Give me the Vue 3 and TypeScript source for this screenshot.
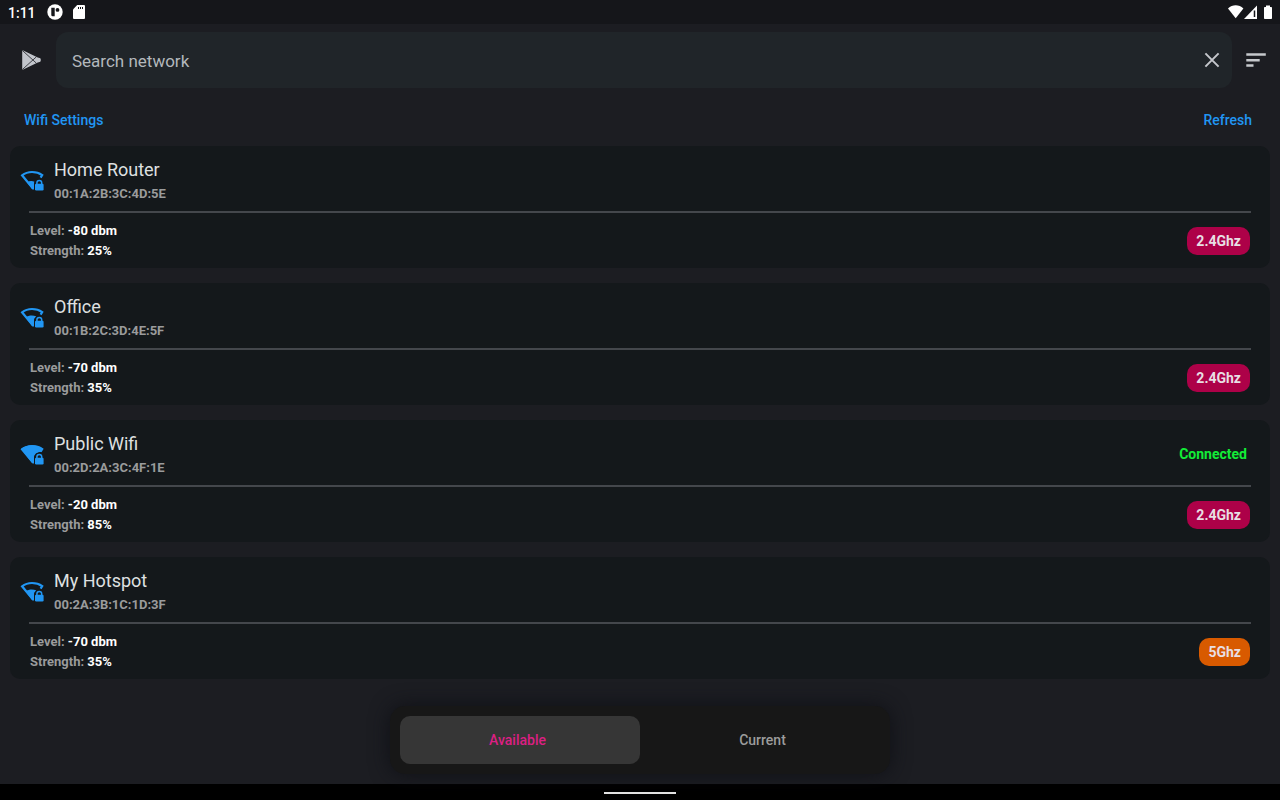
<script setup lang="ts">
import { computed, ref } from 'vue'

interface Network {
  name: string
  mac: string
  level: number
  strength: number
  band: '2.4Ghz' | '5Ghz'
  connected: boolean
}

const networks: Network[] = [
  { name: 'Home Router', mac: '00:1A:2B:3C:4D:5E', level: -80, strength: 25, band: '2.4Ghz', connected: false },
  { name: 'Office', mac: '00:1B:2C:3D:4E:5F', level: -70, strength: 35, band: '2.4Ghz', connected: false },
  { name: 'Public Wifi', mac: '00:2D:2A:3C:4F:1E', level: -20, strength: 85, band: '2.4Ghz', connected: true },
  { name: 'My Hotspot', mac: '00:2A:3B:1C:1D:3F', level: -70, strength: 35, band: '5Ghz', connected: false },
]

const query = ref('')
const tab = ref<'available' | 'current'>('available')

const visible = computed(() =>
  networks.filter(
    (n) =>
      n.name.toLowerCase().includes(query.value.toLowerCase()) &&
      (tab.value === 'available' || n.connected),
  ),
)

// Filled part of the signal fan, by strength
function fill(strength: number): string {
  if (strength > 75) return 'M1 6.8C4 4.5 7.7 3.2 12 3.2s8 1.3 11 3.6l-2.2 3.1C17 9.9 14 12 14 16v5.4h-1.4Z'
  if (strength > 30) return 'M5.6 12.3C8.6 10.3 13 10 16.4 11.5C14.6 12.7 14 14.2 14 16v5.4h-1.6Z'
  return 'M7 14.2C9.2 12.9 12.2 12.8 14.6 13.7L14 15.5v5.9h-1.6Z'
}
</script>

<template>
  <div class="app">
    <div class="status">
      <span class="clock">1:11</span>
      <svg class="status-app" width="16" height="16" viewBox="0 0 16 16">
        <circle cx="8" cy="8" r="7.7" fill="#fff" />
        <path d="M4.300 3.800h3.400v8.400H5.600A1.300 1.300 0 0 1 4.300 11Z" fill="#15161a" />
        <circle cx="10.500" cy="5.900" r="1.900" fill="#15161a" />
      </svg>
      <svg class="status-sd" width="12" height="14" viewBox="0 0 12 14">
        <path d="M4.200 0H11a1 1 0 0 1 1 1v12a1 1 0 0 1-1 1H1a1 1 0 0 1-1-1V4.500Z" fill="#fff" />
        <path d="M5.500 2v2M7.500 2v2M9.500 2v2" stroke="#15161a" stroke-width="1" />
      </svg>
      <span class="spacer"></span>
      <svg width="45" height="14" viewBox="0 0 45 14" fill="#fff">
        <path d="M0 3.600C4.400-.8 11-.8 15.400 3.600L7.700 13.200Z" />
        <path d="M29 .5V14H16Z" />
        <path d="M26.500 5.500V12" stroke="#15161a" stroke-width="1.500" />
        <path d="M38 .500h4V2h1.200a.8.800 0 0 1 .8.800v10.400a.8.800 0 0 1-.8.800h-6.400a.8.800 0 0 1-.8-.8V2.800a.8.800 0 0 1 .8-.8H38Z" />
      </svg>
    </div>

    <header class="topbar">
      <button class="icon-button" type="button" aria-label="Play Store">
        <svg width="24" height="24" viewBox="1 0 24 24">
          <path d="M3.200 2L19.800 10a2.200 2.200 0 0 1 0 4L3.200 22Z" fill="#c2c5cc" />
          <path d="M3.200 2.300L17.300 15.100M3.200 21.700L17.300 8.900" fill="none" stroke="#1c1d22" stroke-width=".8" />
          <circle cx="19.700" cy="12" r="2.200" fill="#c2c5cc" />
        </svg>
      </button>
      <div class="search">
        <input v-model="query" type="text" placeholder="Search network" aria-label="Search network" />
        <button class="clear" type="button" aria-label="Clear search" @click="query = ''">
          <svg width="24" height="24" viewBox="0 0 24 24">
            <path d="M5.400 5.400L18.600 18.600M18.600 5.400L5.400 18.600" stroke="#c5c7cc" stroke-width="2" />
          </svg>
        </button>
      </div>
      <button class="icon-button" type="button" aria-label="Sort">
        <svg width="24" height="24" viewBox="0 0 24 24" fill="#c5c8cc">
          <path d="M2.300 5.200h19.500v2.500H2.300ZM2.300 10.900h13.400v2.500H2.300ZM2.300 16.200h7.200v2.500H2.300Z" />
        </svg>
      </button>
    </header>

    <nav class="links">
      <a href="#settings">Wifi Settings</a>
      <a href="#refresh">Refresh</a>
    </nav>

    <main class="list">
      <article v-for="n in visible" :key="n.mac" class="card">
        <div class="head">
          <svg class="wifi" width="24" height="24" viewBox="0 0 24 24" fill="#2196f3">
            <path
              d="M13 20.600L2.100 7.300C5 5 8.300 4 12 4s7.200.9 10.200 3.100L20.600 9.600"
              fill="none" stroke="#2196f3" stroke-width="2.200"
            />
            <path :d="fill(n.strength)" />
            <path d="M14.600 22.500V16.500a4.400 4.400 0 0 1 9-1.500" fill="none" stroke="#14181b" stroke-width="1" />
            <rect x="15" y="15.700" width="8.600" height="6.800" rx="1.200" />
            <path d="M16.900 16.500V14.800a2.400 2.400 0 0 1 4.800 0V16.500" fill="none" stroke="#2196f3" stroke-width="1.500" />
          </svg>
          <div class="title">
            <h2>{{ n.name }}</h2>
            <p>{{ n.mac }}</p>
          </div>
          <span v-if="n.connected" class="connected">Connected</span>
        </div>
        <div class="body">
          <dl>
            <div><dt>Level:</dt> <dd>{{ n.level }} dbm</dd></div>
            <div><dt>Strength:</dt> <dd>{{ n.strength }}%</dd></div>
          </dl>
          <span class="band" :class="{ five: n.band === '5Ghz' }">{{ n.band }}</span>
        </div>
      </article>
    </main>

    <div class="dock" :class="tab">
      <button type="button" :aria-pressed="tab === 'available'" @click="tab = 'available'">Available</button>
      <button type="button" :aria-pressed="tab === 'current'" @click="tab = 'current'">Current</button>
    </div>

    <footer class="system"><span></span></footer>
  </div>
</template>

<style>
html,
body {
  margin: 0;
  background: #1c1d22;
}
</style>

<style scoped>
.app {
  box-sizing: border-box;
  min-height: 100vh;
  display: flex;
  flex-direction: column;
  background: #1c1d22;
  color: #dfe0e1;
  font-family: Roboto, "Liberation Sans", sans-serif;
  font-size: 14px;
}
button {
  border: 0;
  padding: 0;
  background: none;
  font: inherit;
  color: inherit;
  cursor: pointer;
}
svg {
  display: block;
  flex: none;
}
.status {
  height: 24px;
  padding: 0 7px 0 8px;
  display: flex;
  align-items: center;
  background: #15161a;
  color: #fff;
}
.clock {
  font-weight: 500;
  line-height: 24px;
  margin-top: 2px;
}
.status-app {
  margin-left: 11px;
}
.status-sd {
  margin-left: 10px;
}
.spacer {
  flex: 1;
}
.topbar {
  display: flex;
  align-items: center;
  padding: 8px 0;
}
.icon-button {
  width: 48px;
  height: 48px;
  display: grid;
  place-items: center;
}
.icon-button:first-child {
  width: 56px;
  padding-left: 8px;
}
.search {
  flex: 1;
  height: 56px;
  display: flex;
  align-items: center;
  border-radius: 12px;
  background: #202529;
}
.search input {
  flex: 1;
  min-width: 0;
  height: 56px;
  padding: 2px 16px 0;
  box-sizing: border-box;
  border: 0;
  outline: 0;
  background: none;
  color: #e3e4e6;
  font: 400 17px Roboto, "Liberation Sans", sans-serif;
}
.search input::placeholder {
  color: #b3b8bc;
  opacity: 1;
}
.clear {
  width: 40px;
  height: 48px;
  display: grid;
  place-items: center;
}
.links {
  display: flex;
  justify-content: space-between;
  padding: 14px 28px 16px 24px;
  line-height: 20px;
}
.links a {
  color: #2196f3;
  font-weight: 500;
  text-decoration: none;
}
.list {
  display: flex;
  flex-direction: column;
  gap: 15px;
  padding: 0 10px;
}
.card {
  border-radius: 10px;
  background: #14181b;
}
.head {
  display: flex;
  align-items: center;
  padding: 12px 23px 5px 10px;
}
.wifi {
  margin-right: 10px;
  margin-bottom: 4px;
}
.title {
  flex: 1;
}
h2,
p,
dl,
dd {
  margin: 0;
}
h2 {
  font-size: 18px;
  font-weight: 400;
  line-height: 24px;
}
p {
  color: #9a9b9c;
  font-size: 13px;
  font-weight: 700;
  line-height: 24px;
}
.connected {
  margin-bottom: 4px;
  color: #12ec37;
  font-weight: 700;
}
.body {
  display: flex;
  align-items: center;
  justify-content: space-between;
  margin: 0 19px;
  padding: 8px 1px 7px;
  border-top: 2px solid #44474c;
}
dl {
  font-size: 13px;
  font-weight: 700;
  line-height: 20px;
}
dt,
dd {
  display: inline;
}
dt {
  color: #9a9b9c;
}
dd {
  color: #fff;
}
.band {
  padding: 0 9px;
  border-radius: 10px;
  background: #ad0148;
  color: #e8dfe3;
  font-size: 14px;
  font-weight: 700;
  line-height: 28px;
}
.band.five {
  background: #d85a00;
}
.dock {
  position: relative;
  box-sizing: border-box;
  width: 100%;
  max-width: 500px;
  margin: auto auto 10px;
  padding: 10px 5px;
  display: grid;
  grid-template-columns: 1fr 1fr;
  border-radius: 15px;
  background: #171717;
  box-shadow: 0 0 20px #0f1016;
}
.dock::before {
  content: "";
  position: absolute;
  top: 10px;
  bottom: 10px;
  left: 10px;
  width: calc(50% - 10px);
  border-radius: 10px;
  background: #363636;
}
.dock.current::before {
  left: 50%;
}
.dock button {
  position: relative;
  height: 48px;
  color: #9c9c9c;
  font-weight: 500;
}
.dock button[aria-pressed="true"] {
  color: #dc1f83;
}
.system {
  height: 16px;
  display: flex;
  justify-content: center;
  align-items: center;
  background: #000;
}
.system span {
  width: 72px;
  height: 2px;
  margin-top: 2px;
  background: #e8e8e8;
}
</style>
